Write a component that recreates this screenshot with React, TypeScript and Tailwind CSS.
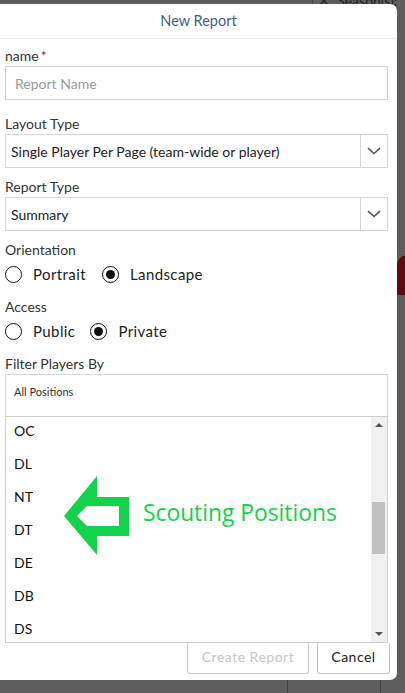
import React from "react";

const Chevron = () => (
  <svg width="14" height="8" viewBox="0 0 14 8" fill="none">
    <path d="M1 1.2 L7 6.5 L13 1.2" stroke="#555" strokeWidth="1.6" />
  </svg>
);

const Radio = ({ checked }: { checked?: boolean }) => (
  <span className="w-[17px] h-[17px] rounded-full border-[1.7px] border-[#111] flex items-center justify-center shrink-0">
    {checked && <span className="w-[9px] h-[9px] rounded-full bg-[#111]" />}
  </span>
);

const Label = ({ children, className = "" }: { children: React.ReactNode; className?: string }) => (
  <div className={`text-[14px] leading-[16px] text-[#333] ${className}`}>{children}</div>
);

const Select = ({ value }: { value: string }) => (
  <div className="h-[34px] border border-[#d6d6d6] flex items-stretch mt-[2px] mr-[9px]">
    <div className="flex-1 flex items-center pl-[5px] text-[14px] text-[#222]">{value}</div>
    <div className="w-[27px] border-l border-[#d6d6d6] flex items-center justify-center">
      <Chevron />
    </div>
  </div>
);

export default function App() {
  const items = ["OC", "DL", "NT", "DT", "DE", "DB", "DS"];
  return (
    <div
      className="relative h-[693px] w-[405px] overflow-hidden bg-[#5e5e5e]"
      style={{ fontFamily: "Lato, 'Noto Sans', sans-serif" }}
    >
      {/* background hints */}
      <div className="absolute left-[318px] top-[-7px] text-[14px] leading-[16px] text-[#222] whitespace-nowrap">✕&nbsp; Season(s):</div>
      <div className="absolute left-[397px] top-[255px] w-[12px] h-[40px] bg-[#5a0c12] rounded-tl-[10px]" />
      <div className="absolute left-[312px] top-[0px] w-px h-[8px] bg-[#444]" />
      <div className="absolute left-[287px] top-[680px] w-px h-[13px] bg-[#444]" />
      <div className="absolute left-[380px] top-[680px] w-px h-[13px] bg-[#444]" />

      <div className="pt-[4px]">
        <div className="relative w-[397px] h-[676px] bg-white rounded-r-[7px] flex flex-col">
          <div className="h-[35px] flex items-center justify-center border-b border-[#eeeeee] text-[14.5px] text-[#3f5f88]">
            New Report
          </div>
          <div className="pl-[5px] flex flex-col">
            <Label className="mt-[9px]">
              name<span className="text-[#b0123a] ml-[2px]">*</span>
            </Label>
            <div className="h-[34px] mt-[2px] mr-[9px] border border-[#d3d3d3] flex items-center pl-[9px] text-[14px] text-[#9a9a9a]">
              Report Name
            </div>

            <Label className="mt-[16px]">Layout Type</Label>
            <Select value="Single Player Per Page (team-wide or player)" />

            <Label className="mt-[11px]">Report Type</Label>
            <Select value="Summary" />

            <Label className="mt-[11px]">Orientation</Label>
            <div className="mt-[6px] h-[20px] flex items-center text-[15px] text-[#222] tracking-[0.4px]">
              <Radio />
              <span className="ml-[11px]">Portrait</span>
              <span className="ml-[16px]"><Radio checked /></span>
              <span className="ml-[11px]">Landscape</span>
            </div>

            <Label className="mt-[15px]">Access</Label>
            <div className="mt-[6px] h-[20px] flex items-center text-[15px] text-[#222] tracking-[0.4px]">
              <Radio />
              <span className="ml-[11px]">Public</span>
              <span className="ml-[15px]"><Radio checked /></span>
              <span className="ml-[11px]">Private</span>
            </div>

            <Label className="mt-[15px]">Filter Players By</Label>
            <div className="mt-[2px] mr-[9px] h-[43px] border border-[#d6d6d6] border-b-[#cfcfcf] pl-[8px] pt-[9px] text-[11px] text-[#333]">
              All Positions
            </div>

            <div className="relative mr-[9px] h-[226px] border border-t-0 border-[#cfcfcf] overflow-hidden flex">
              <div className="flex-1 -mt-[3px]">
                {items.map((it) => (
                  <div key={it} className="h-[33px] flex items-center pl-[8px] text-[14px] text-[#111]">
                    {it}
                  </div>
                ))}
              </div>
              <div className="w-[16px] bg-[#f0f0f0] relative">
                <div className="absolute left-[4px] top-[6px] w-0 h-0 border-l-[4px] border-r-[4px] border-b-[4px] border-l-transparent border-r-transparent border-b-[#555]" />
                <div className="absolute left-[1px] top-[85px] w-[13px] h-[52px] bg-[#c1c1c1]" />
                <div className="absolute left-[4px] bottom-[6px] w-0 h-0 border-l-[4px] border-r-[4px] border-t-[4px] border-l-transparent border-r-transparent border-t-[#555]" />
              </div>
            </div>

            <div className="flex justify-end mr-[7px] gap-[8px]">
              <div className="w-[122px] h-[31px] pb-[3px] border border-t-0 border-[#d0d0d0] rounded-b-[3px] flex items-center justify-center text-[14px] text-[#c6c6c6] tracking-[0.5px]">
                Create Report
              </div>
              <div className="w-[73px] h-[31px] pb-[3px] border border-t-0 border-[#c8c8c8] rounded-b-[3px] flex items-center justify-center text-[14px] text-[#222] tracking-[0.5px]">
                Cancel
              </div>
            </div>
          </div>

          {/* annotation */}
          <svg className="absolute left-[60px] top-[466px]" width="75" height="92" viewBox="60 466 75 92">
            <path
              fillRule="evenodd"
              fill="#14d24b"
              d="M64 512 L97 472 L97 493 L129 493 L129 532 L97 532 L97 551 Z M77 512 L87 502 L119 502 L119 522 L87 522 Z"
            />
          </svg>
          <div
            className="absolute left-[143px] top-[494px] text-[22.8px] leading-[30px] text-[#14d24b] whitespace-nowrap"
            style={{ fontFamily: "'Open Sans', sans-serif" }}
          >
            Scouting Positions
          </div>
        </div>
      </div>
    </div>
  );
}
